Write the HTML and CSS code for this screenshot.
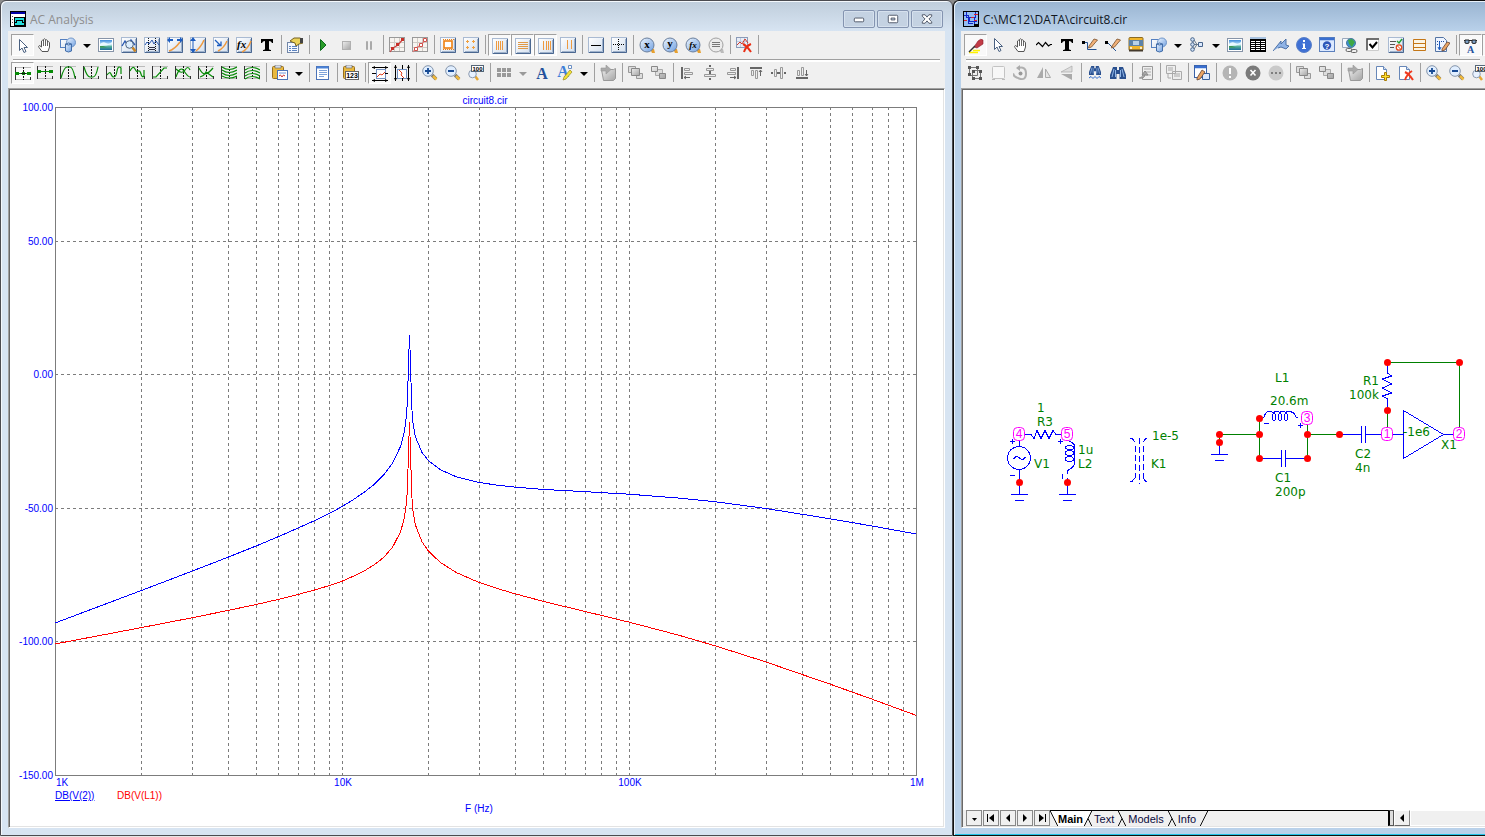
FILE: index.html
```html
<!DOCTYPE html>
<html lang="en">
<head>
<meta charset="utf-8">
<title>AC Analysis</title>
<link rel="stylesheet" href="styles.css">
</head>
<body>
<svg class="defs" aria-hidden="true">
<defs>
<linearGradient id="g-box" x1="0" y1="0" x2="1" y2="1"><stop offset="0" stop-color="#fff"/><stop offset="1" stop-color="#d3dfee"/></linearGradient>
<linearGradient id="g-gray" x1="0" y1="0" x2="1" y2="1"><stop offset="0" stop-color="#eee"/><stop offset="1" stop-color="#a4a4a4"/></linearGradient>
<linearGradient id="g-blue" x1="0" y1="0" x2="1" y2="1"><stop offset="0" stop-color="#eef6ff"/><stop offset="1" stop-color="#6f9fe0"/></linearGradient>
<linearGradient id="g-sky" x1="0" y1="0" x2="0" y2="1"><stop offset="0" stop-color="#3d8cdc"/><stop offset=".5" stop-color="#d5f0ff"/><stop offset=".6" stop-color="#5db89a"/><stop offset="1" stop-color="#1c6a9a"/></linearGradient>
<symbol id="cursor" viewBox="0 0 16 16"><path d="M4.500 1.500v11l2.500-2.500 2 4.500 2-1-2-4h3.500z" fill="#fff" stroke="#4a6080"/></symbol>
<symbol id="hand" viewBox="0 0 16 16"><path d="M5 14.500L2 10.500Q1 9 2.500 8.500L4.500 10V4Q5.500 2.500 6.500 4V2.500Q7.500 1 8.500 2.500V3.500Q9.500 2 10.500 3.500V5Q12 4 12.500 5.500V10L11 14.500z" fill="#fff" stroke="#555"/><path d="M6.500 4v5M8.500 3v6M10.500 5v4" stroke="#666" fill="none"/></symbol>
<symbol id="shapes" viewBox="0 0 16 16"><rect x=".5" y="2.500" width="9" height="8" fill="url(#g-box)" stroke="#5580c0"/><circle cx="11" cy="5.500" r="4.500" fill="url(#g-blue)" stroke="#6f95c8"/><path d="M5.500 7v7q3 2 6 0V7q-3-2-6 0z" fill="url(#g-blue)" stroke="#426da8"/><path d="M5.500 7q3 2 6 0" fill="none" stroke="#426da8"/></symbol>
<symbol id="picture" viewBox="0 0 16 16"><rect x=".5" y="1.500" width="15" height="13" fill="#fff" stroke="#8794a8"/><rect x="2" y="3" width="12" height="10" fill="url(#g-sky)"/><path d="M2 7q3-3 6-1t6-1v2q-5 2-12 2z" fill="#e9faff"/><path d="M2 9l3 0 4 1.500-7 0z" fill="#3c9a50"/></symbol>
<symbol id="box" viewBox="0 0 16 16"><rect x=".5" y=".5" width="15" height="15" fill="url(#g-box)" stroke="#a9bad2"/><path d="M15.500 1v14.500H1" fill="none" stroke="#4a6790"/><path d="M14.500 2v12.500H2" fill="none" stroke="#9fb2cc"/></symbol>
<symbol id="gzoom" viewBox="0 0 16 16"><use href="#box"/><path d="M1 9l3-5 3 5 3-6 4 5" fill="none" stroke="#2b59b0" stroke-width="1.400"/><circle cx="8.500" cy="7.500" r="3.800" fill="#dceeff" stroke="#4f6580"/><path d="M11.500 10.500l3 4" stroke="#c98422" stroke-width="2.500"/></symbol>
<symbol id="glines" viewBox="0 0 16 16"><use href="#box"/><path d="M1 8l2-3 2 2 3-4 2 4 2-3 3 4" fill="none" stroke="#2b59b0"/><path d="M4.500 1v14M11.500 1v14" stroke="#111" stroke-dasharray="1 1"/><path d="M5 10.500h6M5 12.500h6" stroke="#334"/></symbol>
<symbol id="gh" viewBox="0 0 16 16"><use href="#box"/><path d="M2 14q6-2 11-9" fill="none" stroke="#ee9a40" stroke-width="1.500"/><path d="M0 3l3-3v2h3v2H3v2zM16 3l-3-3v2h-3v2h3v2z" fill="#1d5dc0"/></symbol>
<symbol id="gv" viewBox="0 0 16 16"><use href="#box"/><path d="M6 14q5-4 8-11" fill="none" stroke="#ee9a40" stroke-width="1.500"/><path d="M3 0l3 4H3.500v8H6l-3 4-3-4h2.500V4H0z" fill="#1d5dc0"/></symbol>
<symbol id="ga" viewBox="0 0 16 16"><use href="#box"/><path d="M5 14q6-3 9-10" fill="none" stroke="#ee9a40" stroke-width="1.500"/><path d="M2 3l5 5M8 4.500V8.500H4" fill="none" stroke="#1d5dc0" stroke-width="1.300"/></symbol>
<symbol id="gfx" viewBox="0 0 16 16"><use href="#box"/><path d="M6 15q6-3 9-11" fill="none" stroke="#ee9a40" stroke-width="1.500"/><text x="1" y="11" class="ic-fx">fx</text></symbol>
<symbol id="bigt" viewBox="0 0 16 16"><path d="M2 2h12v4h-1q-.5-2-3-2v8q0 1 2 1v1H4v-1q2 0 2-1V4Q3.500 4 3 6H2z" fill="#000"/></symbol>
<symbol id="props" viewBox="0 0 16 16"><rect x=".5" y="5.500" width="11" height="10" fill="#f4f8ff" stroke="#7287a8"/><path d="M2 9.500h2M2 11.500h2M2 13.500h2M5 9.500h5M5 11.500h5M5 13.500h5" stroke="#5b82c0"/><path d="M3 4l4-3 6 0 3 2v3l-4 1-3 2-1-3-3-1z" fill="#ecd25a" stroke="#756020"/><path d="M13 1h3v5h-3z" fill="#444"/></symbol>
<symbol id="play" viewBox="0 0 16 16"><path d="M5.500 2.500v11l5.500-5.500z" fill="#2a9c2a" stroke="#0c6b1d"/></symbol>
<symbol id="stop" viewBox="0 0 16 16"><rect x="4.500" y="4.500" width="8" height="8" fill="url(#g-gray)" stroke="#b0b0b0"/></symbol>
<symbol id="pause" viewBox="0 0 16 16"><path d="M5.500 4.500h1v8h-1zM9.500 4.500h1v8h-1z" fill="#ddd" stroke="#aaa"/></symbol>
<symbol id="pts" viewBox="0 0 16 16"><rect x=".5" y=".5" width="15" height="14" fill="#f7f4f0" stroke="#999"/><path d="M5.500 1v13M10.500 1v13M1 5.500h14M1 10.500h14" stroke="#cfcbc5"/></symbol>
<symbol id="pts1" viewBox="0 0 16 16"><use href="#pts"/><path d="M1 15L4 11 9 8l5-6" fill="none" stroke="#c44" stroke-width="1.200"/><path d="M2 10h3v3H2zM7 6h3v3H7zM12 1h3v3h-3z" fill="#c83028"/></symbol>
<symbol id="pts2" viewBox="0 0 16 16"><use href="#pts"/><path d="M1 15L4 11 9 8l5-6" fill="none" stroke="#d77" stroke-width="1.200"/><path d="M2.500 10.500h3v3h-3zM7.500 6.500h3v3h-3zM11.500 1.500h3v3h-3z" fill="#fff" stroke="#d0504a"/></symbol>
<symbol id="odots" viewBox="0 0 16 16"><use href="#box"/><rect x="4" y="4" width="8" height="7" fill="#fff" stroke="#f08010" stroke-width="1.600"/><path d="M3 2.500h11M3 12.500h11" stroke="#f08010" stroke-dasharray="1 1"/></symbol>
<symbol id="oplus" viewBox="0 0 16 16"><use href="#box"/><path d="M3 4.500h3M4.500 3v3M9 4.500h3M10.500 3v3M3 10.500h3M4.500 9v3M9 10.500h3M10.500 9v3" stroke="#f0a040"/></symbol>
<symbol id="vl4" viewBox="0 0 16 16"><use href="#box"/><path d="M4.500 3v9M6.500 3v9M8.500 3v9M10.500 3v9" stroke="#ee9a40"/></symbol>
<symbol id="hl4" viewBox="0 0 16 16"><use href="#box"/><path d="M3 4.500h10M3 6.500h10M3 8.500h10M3 10.500h10" stroke="#e09a48"/></symbol>
<symbol id="vl3" viewBox="0 0 16 16"><use href="#box"/><path d="M5.500 3v9M8.500 3v9M10.500 3v9M12.500 3v9" stroke="#ee9a40"/></symbol>
<symbol id="vl2" viewBox="0 0 16 16"><use href="#box"/><path d="M7.500 3v9M11.500 3v9" stroke="#ee9a40"/></symbol>
<symbol id="hbar" viewBox="0 0 16 16"><use href="#box"/><path d="M3 8.500h10" stroke="#000"/></symbol>
<symbol id="cross" viewBox="0 0 16 16"><use href="#box"/><path d="M2 7.500h12M7.500 2v12" stroke="#000" stroke-dasharray="1 1"/></symbol>
<symbol id="ball" viewBox="0 0 16 16"><path d="M11 12h4l1 4h-3z" fill="#e6a030"/><circle cx="8" cy="8" r="7" fill="url(#g-blue)" stroke="#6b7f9c"/></symbol>
<symbol id="bx" viewBox="0 0 16 16"><use href="#ball"/><text x="8" y="11" class="ic-ball">x</text></symbol>
<symbol id="by" viewBox="0 0 16 16"><use href="#ball"/><text x="8" y="10" class="ic-ball">y</text></symbol>
<symbol id="bf" viewBox="0 0 16 16"><use href="#ball"/><text x="8" y="11" class="ic-ball ic-it">fx</text></symbol>
<symbol id="bg" viewBox="0 0 16 16"><path d="M11 12h4l1 4h-3z" fill="#bbb"/><circle cx="8" cy="8" r="7" fill="#ececec" stroke="#a0a0a0"/><path d="M4 5.500h8M4 7.500h8M4 9.500h8" stroke="#777"/></symbol>
<symbol id="gdel" viewBox="0 0 16 16"><rect x=".5" y=".5" width="11" height="10" fill="#e8edf6" stroke="#8b9bb8"/><path d="M4.500 1v9M8.500 1v9M1 4.500h10" stroke="#c3cde0"/><path d="M1 8l3-3 2 2 3-5 3 4" fill="none" stroke="#d23a28"/><path d="M7 7q4 2 8 8M15 7q-5 2-7 8" stroke="#ea2e14" stroke-width="2" fill="none"/></symbol>
<symbol id="ax" viewBox="0 0 16 16"><path d="M0 1.500h16M0 13.500h16" stroke="#bbb"/><path d="M.5 1v13M15.500 11v3" stroke="#333"/><path d="M8.500 1v13" stroke="#111" stroke-dasharray="2 1"/></symbol>
<symbol id="a1" viewBox="0 0 16 16"><use href="#ax"/><path d="M0 7.500h16" stroke="#078a07"/><path d="M0 6h4v3H0zM12 6h4v3h-4zM7 6h3v3H7z" fill="#078a07"/><path d="M6 7.500h5" stroke="#111"/></symbol>
<symbol id="a2" viewBox="0 0 16 16"><use href="#ax"/><path d="M0 6.500h16" stroke="#078a07"/><path d="M0 5h4v3H0zM12 5h4v3h-4z" fill="#078a07"/></symbol>
<symbol id="a3" viewBox="0 0 16 16"><use href="#ax"/><path class="gr" d="M1 13Q4 2 7 2h3q3 0 5 11"/></symbol>
<symbol id="a4" viewBox="0 0 16 16"><use href="#ax"/><path class="gr" d="M1 2q3 10 6 10h3q3 0 5-10"/></symbol>
<symbol id="a5" viewBox="0 0 16 16"><use href="#ax"/><path class="gr" d="M1 10q3-4 4-1t3 3q2 0 3-6t4-3v6"/></symbol>
<symbol id="a6" viewBox="0 0 16 16"><use href="#ax"/><path class="gr" d="M1 6q3-6 5-2t3 2q2-1 3 3t3 2V5"/></symbol>
<symbol id="a7" viewBox="0 0 16 16"><use href="#ax"/><path class="gr" d="M1 12h3l8-9h3"/></symbol>
<symbol id="a8" viewBox="0 0 16 16"><use href="#ax"/><path class="gr" d="M1 12q4-12 8-6t6 6M1 4q6 6 9 1t5 0"/></symbol>
<symbol id="a9" viewBox="0 0 16 16"><use href="#ax"/><path class="gr" d="M1 3q3 6 6 6t8-6M2 12q4-1 6-5l7 5"/></symbol>
<symbol id="a10" viewBox="0 0 16 16"><use href="#ax"/><path class="gr" d="M1 2q7 5 15 0M1 5q7 5 15 0M1 8q7 5 15 0M1 11q7 4 15 0"/></symbol>
<symbol id="a11" viewBox="0 0 16 16"><use href="#ax"/><path class="gr" d="M1 5q7-5 15 0M1 8q7-5 15 0M1 11q7-5 15 0M1 14q7-5 15 0"/></symbol>
<symbol id="clip" viewBox="0 0 16 16"><rect x=".5" y="1.500" width="11" height="12" rx="1" fill="#e9b93f" stroke="#9a701c"/><path d="M3 0h6v3H3z" fill="#d8dde6" stroke="#666" stroke-width=".6"/></symbol>
<symbol id="clipg" viewBox="0 0 16 16"><use href="#clip"/><rect x="5.500" y="5.500" width="10" height="9" fill="#fff" stroke="#4b73b8"/><path d="M7 8h7" stroke="#6e97d8"/><path d="M7 11l1.500-1 1.500 2 1.500-2 1.500 1" fill="none" stroke="#c33"/></symbol>
<symbol id="clipn" viewBox="0 0 16 16"><use href="#clip"/><rect x="2.500" y="6.500" width="13" height="8" fill="#fff" stroke="#666"/><text x="9" y="13" class="ic-num">123</text></symbol>
<symbol id="list" viewBox="0 0 16 16"><rect x="1.500" y="1.500" width="12" height="13" fill="#fff" stroke="#4b73b8"/><path d="M2 2.500h11" stroke="#4b83d8" stroke-width="2"/><path d="M4 5.500h8M4 7.500h8M4 9.500h8M4 11.500h5" stroke="#7ea3da"/></symbol>
<symbol id="rng" viewBox="0 0 16 16"><rect x="4.500" y="3.500" width="9" height="9" fill="#fff" stroke="#7390c0"/><path d="M5 11l3-3 2 1 3-3" fill="none" stroke="#e23b1b"/><path d="M0 1.500h16M0 14.500h16M0 7.500h4M13 7.500h3" stroke="#000"/><path d="M0 1.500l3-1.500v3zM16 1.500L13 0v3zM0 14.500l3-1.500v3zM16 14.500l-3-1.500v3z"/></symbol>
<symbol id="rngv" viewBox="0 0 16 16"><use href="#rng" transform="rotate(90 8 8)"/></symbol>
<symbol id="zin" viewBox="0 0 16 16"><path d="M10 10l4 4" stroke="#777" stroke-width="3.500"/><path d="M11 11l3.500 3.500" stroke="#efb83c" stroke-width="2.500"/><circle cx="6" cy="6" r="5.300" fill="#e0eeff" stroke="#8494aa"/><path d="M3 6h6M6 3v6" stroke="#174a94" stroke-width="1.800"/></symbol>
<symbol id="zout" viewBox="0 0 16 16"><path d="M10 10l4 4" stroke="#777" stroke-width="3.500"/><path d="M11 11l3.500 3.500" stroke="#efb83c" stroke-width="2.500"/><circle cx="6" cy="6" r="5.300" fill="#e0eeff" stroke="#8494aa"/><path d="M3 6h6" stroke="#174a94" stroke-width="1.800"/></symbol>
<symbol id="z100" viewBox="0 0 16 16"><path d="M7 11l3 4" stroke="#e6a834" stroke-width="2.500"/><circle cx="4.500" cy="9" r="3.800" fill="#e8f2ff" stroke="#8d9bb0"/><rect x="3.500" y=".5" width="12" height="6" fill="#fff" stroke="#567"/><text x="9.500" y="6" class="ic-100">100</text></symbol>
<symbol id="grid" viewBox="0 0 16 16"><path d="M1 3h4v4H1zM6 3h4v4H6zM11 3h4v4h-4zM1 8h4v4H1zM6 8h4v4H6zM11 8h4v4h-4z" fill="#999"/></symbol>
<symbol id="fonta" viewBox="0 0 16 16"><text x="8" y="14" class="ic-a">A</text></symbol>
<symbol id="fontp" viewBox="0 0 16 16"><text x="6" y="12" class="ic-a ic-lt">A</text><path d="M11.500 .5h3v3h-3z" fill="#fff" stroke="#6a8fc4"/><path d="M13 5l2 2-6 7-3 1 1-3z" fill="#f2e236" stroke="#988a20" stroke-width=".7"/></symbol>
<symbol id="fold" viewBox="0 0 16 16"><path d="M1.500 4.500h12l2-1v10l-2 2h-10z" fill="url(#g-gray)" stroke="#999"/><path d="M1 3h5V0l5 4.500L6 9V6H1z" fill="#aaa" stroke="#999" stroke-width=".6"/></symbol>
<symbol id="front" viewBox="0 0 16 16"><path d="M.5 1.500h7v6h-7zM8.500 8.500h6v5h-6z" fill="#ddd" stroke="#999"/><path d="M3.500 3.500h8v7h-8z" fill="url(#g-gray)" stroke="#888"/></symbol>
<symbol id="back" viewBox="0 0 16 16"><path d="M4.500 4.500h7v6h-7z" fill="#ddd" stroke="#aaa"/><path d="M.5 1.500h6v5h-6zM8.500 8.500h6v5h-6z" fill="url(#g-gray)" stroke="#888"/></symbol>
<symbol id="al" viewBox="0 0 16 16"><path d="M3 2v12" stroke="#666" stroke-width="2"/><path d="M5.500 3.500h5v2h-5zM5.500 7.500h8v2h-8z" fill="#eee" stroke="#999"/><path d="M5 12.500h6M7 11l-2 1.500 2 1.500" fill="none" stroke="#666"/></symbol>
<symbol id="ac" viewBox="0 0 16 16"><path d="M8 0v2M8 6v3M8 13v2" stroke="#666" stroke-width="2"/><path d="M4.500 3.500h7v2h-7zM2.500 9.500h11v2h-11z" fill="#eee" stroke="#999"/></symbol>
<symbol id="ar" viewBox="0 0 16 16"><use href="#al" transform="translate(16 0) scale(-1 1)"/></symbol>
<symbol id="at" viewBox="0 0 16 16"><use href="#al" transform="matrix(0 1 1 0 0 0)"/></symbol>
<symbol id="am" viewBox="0 0 16 16"><use href="#ac" transform="matrix(0 1 1 0 0 0)"/></symbol>
<symbol id="ab" viewBox="0 0 16 16"><use href="#al" transform="matrix(0 -1 1 0 0 16)"/></symbol>
<symbol id="brush" viewBox="0 0 16 16"><path d="M1 14.500h9M5 12.500h7" stroke="#fff200" stroke-width="1.500"/><path d="M6 9l4-6q3-3 5-1v4l-6 4z" fill="#c23c46" stroke="#8c1c28" stroke-width=".6"/><path d="M1 14l6-6" stroke="#333" stroke-width="1.500"/></symbol>
<symbol id="wave" viewBox="0 0 16 16"><path d="M0 8l2.500-2.500 4 4 3-4 3 3.500 2-1.500h1.500" fill="none" stroke="#000" stroke-width="1.200"/></symbol>
<symbol id="pencil" viewBox="0 0 16 16"><path d="M7 9l5-7 3.500 1-6 7-3 1z" fill="#f0b078" stroke="#7a4f2a" stroke-width=".8"/></symbol>
<symbol id="wire" viewBox="0 0 16 16"><path d="M1 5.500h4.500v7h9" fill="none" stroke="#225090"/><path d="M0 4h3v3H0z"/><use href="#pencil"/></symbol>
<symbol id="diag" viewBox="0 0 16 16"><path d="M2 5l9 9" stroke="#225090"/><path d="M0 4h3v3H0z"/><use href="#pencil"/></symbol>
<symbol id="bus" viewBox="0 0 16 16"><rect x="1" y=".5" width="14" height="13" rx="1" fill="#f0b52a" stroke="#8a6a24"/><path d="M1 3h14v6H1z" fill="#5d83a8"/><path d="M5 4h6v4H5z" fill="#b8d2e8"/><path d="M1 12.500h14v2H1z" fill="#443a2c"/><path d="M2 11h2M12 11h2" stroke="#fff" stroke-width="1.500"/></symbol>
<symbol id="tree" viewBox="0 0 16 16"><path d="M4 4v8M5 7.500h5M5 3l3 4.500-3 4.500" fill="none" stroke="#678"/><circle cx="3.500" cy="2.500" r="1.800" fill="#cfe0f4" stroke="#47648c"/><circle cx="3.500" cy="7.500" r="1.800" fill="#cfe0f4" stroke="#47648c"/><circle cx="3.500" cy="12.500" r="1.800" fill="#cfe0f4" stroke="#47648c"/><path d="M9.500 5.500h4v4h-4z" fill="#dceaff" stroke="#47648c"/></symbol>
<symbol id="table" viewBox="0 0 16 16"><path d="M0 0h16v2H0z" fill="#a9c3e0"/><path d="M0 2h16v13H0z"/><path d="M1 4.500h4M6 4.500h4M11 4.500h4M1 6.500h4M6 6.500h4M11 6.500h4M1 8.500h4M6 8.500h4M11 8.500h4M1 10.500h4M6 10.500h4M11 10.500h4M1 12.500h4M6 12.500h4M11 12.500h4" stroke="#fff"/></symbol>
<symbol id="flag" viewBox="0 0 16 16"><path d="M0 14L8 4l0 3 5-5 0 6 3 1-3 3-5-2-3 1" fill="#8fb3e6" stroke="#41689f" stroke-width=".9"/></symbol>
<symbol id="info" viewBox="0 0 16 16"><circle cx="8" cy="8" r="7.500" fill="#3f70d4" stroke="#5a80c8"/><path d="M7 3h2v2H7zM6.500 6.500H9V11h1v1H6v-1h1V7.500h-.5z" fill="#fff"/></symbol>
<symbol id="help" viewBox="0 0 16 16"><rect x=".5" y=".5" width="15" height="14" fill="#dce9ff" stroke="#5c80bc"/><path d="M1 2h14" stroke="#3a6fd0" stroke-width="2.500"/><circle cx="8" cy="8.500" r="4.200" fill="#2d55b8"/><text x="8" y="11.500" class="ic-q">?</text></symbol>
<symbol id="web" viewBox="0 0 16 16"><path d="M.5 1.500h7v9h-7z" fill="#f4f8ff" stroke="#9aa8bc"/><circle cx="9" cy="6" r="4.500" fill="#3b8fd0" stroke="#4a7a9c"/><path d="M6 3l4-1 3 3-3 5-3-3z" fill="#3fa844"/><rect x="4" y="11.500" width="6" height="3" rx="1.500" fill="none" stroke="#666"/><rect x="9" y="12.500" width="6" height="3" rx="1.500" fill="none" stroke="#666"/></symbol>
<symbol id="check" viewBox="0 0 16 16"><path d="M2.500 2.500h11v11h-11z" fill="#fff"/><path d="M2 13.500V2h12" fill="none" stroke="#444" stroke-width="1.500"/><path d="M13.500 3v10.500H3" fill="none" stroke="#ccc"/><path d="M4.500 7l3 3.500L12 5" fill="none" stroke="#000" stroke-width="2"/></symbol>
<symbol id="enab" viewBox="0 0 16 16"><use href="#box"/><path d="M2 4.500h6M2 7.500h5M2 10.500h4" stroke="#555"/><path d="M9 4l2 2 3-4" fill="none" stroke="#20a030" stroke-width="1.300"/><circle cx="11" cy="10.500" r="2.700" fill="#fff" stroke="#e04a20" stroke-width="1.300"/><path d="M9 8.500l4 4" stroke="#e04a20"/></symbol>
<symbol id="rows" viewBox="0 0 16 16"><path d="M2.500 2.500h12v11h-12zM2 6.500h12M2 10.500h12" fill="#fbf5e6" stroke="#c47718"/></symbol>
<symbol id="sheet" viewBox="0 0 16 16"><path d="M1.500 .5h8l3 3v11h-11z" fill="#eef4ff" stroke="#5474a4"/><path d="M3 4.500h7M3 7.500h4" stroke="#1d4da0" stroke-dasharray="1 1"/><path d="M5.500 5v7M4 10l1.500 3L7 10" fill="none" stroke="#1d5dc0"/><path d="M8 12l5-7 3 1-5 7-3 1z" fill="#eaa565" stroke="#643" stroke-width=".8"/></symbol>
<symbol id="glassa" viewBox="0 0 16 16"><path d="M1 2.500h13" stroke="#222"/><path d="M2 2h4v3q-2 1-4 0zM9 2h4v3q-2 1-4 0z" fill="#7fa5cc" stroke="#222"/><text x="7.500" y="15" class="ic-sa">A</text></symbol>
<symbol id="sel" viewBox="0 0 16 16"><path d="M2.500 2.500h8v8h-8zM5.500 5.500h8v8h-8z" fill="none" stroke="#777"/><path d="M1 1h3v3H1zM9 1h3v3H9zM1 8h3v3H1zM5 5h3v3H5zM12 5h3v3h-3zM5 12h3v3H5zM12 12h3v3h-3z" fill="#555"/></symbol>
<symbol id="frm" viewBox="0 0 16 16"><rect x="2.500" y="1.500" width="12" height="12" rx="1" fill="#f7f7f7" stroke="#c3c3c3"/><path d="M2 14.500h3M12 14.500h3" stroke="#bbb"/></symbol>
<symbol id="rot" viewBox="0 0 16 16"><path d="M5 3q8-2 8 5.500t-7 5-5-5" fill="none" stroke="#b0b0b0" stroke-width="2"/><circle cx="7.500" cy="8.500" r="2" fill="#999"/><path d="M7 0v6L3 3z" fill="#aaa"/></symbol>
<symbol id="flh" viewBox="0 0 16 16"><path d="M1 13L7 2v11z" fill="#aaa"/><path d="M9.500 4v8.500h5z" fill="#e4e4e4" stroke="#aaa"/></symbol>
<symbol id="flv" viewBox="0 0 16 16"><path d="M13 1L2 7h11z" fill="#ddd" stroke="#aaa" stroke-width=".7"/><path d="M13 15L2 9h11z" fill="#aaa"/></symbol>
<symbol id="bino" viewBox="0 0 16 16"><path d="M3 2h4v3h2V2h4l3 8v4H9.500V9h-3v5H0v-4z" fill="#294f8e"/><path d="M4 4L2 12M12 4l2 8M5.500 5v7M10.500 5v7" stroke="#91b7e8"/></symbol>
<symbol id="binow" viewBox="0 0 16 16"><use href="#bino" x="2" y="-1" width="12" height="13"/><path d="M2 13l2-1.500 2 2 2-2 2 2 2-2 2 1.500" fill="none" stroke="#2a66c8"/></symbol>
<symbol id="rep" viewBox="0 0 16 16"><path d="M4.500 1.500h10v13h-10z" fill="#eee" stroke="#999"/><path d="M6 4h7M8 7h5M8 10h5" stroke="#aaa"/><path d="M1 13q6 1 6-4M4 10l3-4 3 4z" fill="#aaa" stroke="#888"/></symbol>
<symbol id="pages" viewBox="0 0 16 16"><path d="M.5.500h9v8h-9zM6.500 6.500h9v8h-9z" fill="#eee" stroke="#aaa"/><path d="M2 3h5M2 5h5M8 9h6M8 11h6M2 9v4h3" fill="none" stroke="#aaa"/></symbol>
<symbol id="wedit" viewBox="0 0 16 16"><rect x=".5" y=".5" width="12" height="12" fill="#fff" stroke="#3a62a8"/><path d="M1 2h11" stroke="#3a6fd0" stroke-width="2.500"/><path d="M8.500 8.500h7v6h-7z" fill="#dbe9ff" stroke="#37619c"/><path d="M3 13l5-8 3 2-5 7-3 1z" fill="#eaa565" stroke="#643" stroke-width=".8"/></symbol>
<symbol id="sexc" viewBox="0 0 16 16"><circle cx="8" cy="8" r="7.500" fill="#b5b5b5"/><path d="M8 3v6M8 11v2" stroke="#fff" stroke-width="2"/></symbol>
<symbol id="sx" viewBox="0 0 16 16"><circle cx="8" cy="8" r="7.500" fill="#7b7b7b"/><path d="M5.500 5l5 5.500M10.500 5l-5 5.500" stroke="#fff" stroke-width="1.600"/></symbol>
<symbol id="sdot" viewBox="0 0 16 16"><circle cx="8" cy="8" r="7.500" fill="#cacaca"/><path d="M3 8h2M7 8h2M11 8h2" stroke="#666" stroke-width="1.600"/></symbol>
<symbol id="page" viewBox="0 0 16 16"><path d="M1.500 1.500h7l3 3v10h-10z" fill="#fff" stroke="#6787b8"/><path d="M8.500 1.500v3h3" fill="#d5e3f8" stroke="#6787b8"/></symbol>
<symbol id="padd" viewBox="0 0 16 16"><use href="#page"/><path d="M9.500 7.500h2v3h3v2h-3v3h-2v-3h-3v-2h3z" fill="#ffe02c" stroke="#a87c08"/></symbol>
<symbol id="pdel" viewBox="0 0 16 16"><use href="#page"/><path d="M7 7q4 2 8 8M14 6q-5 3-7 9" stroke="#f03a1e" stroke-width="2" fill="none"/></symbol>
</defs>
</svg>

<main class="desktop">
<section class="win win-idle">
  <header class="title">
    <svg class="title-icon" viewBox="0 0 16 16" shape-rendering="crispEdges"><path d="M0 0h16v16H0z"/><path d="M1 3h14v12H1z" fill="#fff"/><path d="M1 1h14v2H1z" fill="#0000a8"/><path d="M4 6h11v9H4z"/><path d="M5 7h9v7H5z" fill="#22dede"/><path d="M5 12q2 0 2-3h5q0 3 2 3" fill="none" stroke="#000"/><path d="M2 5h1M2 8h1M2 11h1" stroke="#555"/></svg>
    <h1>AC Analysis</h1>
    <div class="caps">
      <button aria-label="Minimize"><svg viewBox="0 0 31 17"><rect x="10.500" y="7.500" width="10" height="4" rx="1" fill="#fff" stroke="#4d5566"/></svg></button>
      <button aria-label="Restore"><svg viewBox="0 0 31 17"><rect x="10.500" y="4.500" width="10" height="8" rx="1" fill="#fff" stroke="#4d5566"/><path d="M13.500 7.500h4v2h-4z" fill="#ccd8e8" stroke="#4d5566"/></svg></button>
      <button aria-label="Close"><svg viewBox="0 0 31 17"><path d="M10.500 4h3l2 2.500 2-2.500h3v1.500L17.500 8.500l3 3V13h-3l-2-2.500-2 2.500h-3v-1.500l3-3-3-3z" fill="#fff" stroke="#4d5566"/></svg></button>
    </div>
  </header>
  <div class="bars">
    <div class="bar" role="toolbar" aria-label="Main">
      <button class="on" aria-label="Select"><svg><use href="#cursor"/></svg></button><button aria-label="Pan"><svg><use href="#hand"/></svg></button><button aria-label="Graphics"><svg><use href="#shapes"/></svg></button><button class="dd" aria-label="Graphics menu"></button><button aria-label="Picture"><svg><use href="#picture"/></svg></button><button aria-label="Scale"><svg><use href="#gzoom"/></svg></button><button aria-label="Cursor mode"><svg><use href="#glines"/></svg></button><button aria-label="Horizontal tag"><svg><use href="#gh"/></svg></button><button aria-label="Vertical tag"><svg><use href="#gv"/></svg></button><button aria-label="Point tag"><svg><use href="#ga"/></svg></button><button aria-label="Performance tag"><svg><use href="#gfx"/></svg></button><button aria-label="Text"><svg><use href="#bigt"/></svg></button>
      <i></i><button aria-label="Properties"><svg><use href="#props"/></svg></button>
      <i></i><button aria-label="Run"><svg><use href="#play"/></svg></button><button aria-label="Stop"><svg><use href="#stop"/></svg></button><button aria-label="Pause"><svg><use href="#pause"/></svg></button>
      <i></i><button aria-label="Data points"><svg><use href="#pts1"/></svg></button><button aria-label="Tokens"><svg><use href="#pts2"/></svg></button>
      <i></i><button aria-label="Ruler"><svg><use href="#odots"/></svg></button><button aria-label="Plus marks"><svg><use href="#oplus"/></svg></button>
      <i></i><button class="on" aria-label="Vertical grid"><svg><use href="#vl4"/></svg></button><button class="on" aria-label="Horizontal grid"><svg><use href="#hl4"/></svg></button><button class="on" aria-label="Minor log grid"><svg><use href="#vl3"/></svg></button><button aria-label="Minor grid"><svg><use href="#vl2"/></svg></button>
      <i></i><button aria-label="Baseline"><svg><use href="#hbar"/></svg></button><button aria-label="Crosshair"><svg><use href="#cross"/></svg></button>
      <i></i><button aria-label="Go to X"><svg><use href="#bx"/></svg></button><button aria-label="Go to Y"><svg><use href="#by"/></svg></button><button aria-label="Go to performance"><svg><use href="#bf"/></svg></button><button aria-label="Go to branch"><svg><use href="#bg"/></svg></button>
      <i></i><button aria-label="Delete plot"><svg><use href="#gdel"/></svg></button><i></i>
    </div>
    <div class="bar" role="toolbar" aria-label="Cursor">
      <button class="on" aria-label="Next point"><svg><use href="#a1"/></svg></button><button aria-label="Next"><svg><use href="#a2"/></svg></button><button aria-label="Peak"><svg><use href="#a3"/></svg></button><button aria-label="Valley"><svg><use href="#a4"/></svg></button><button aria-label="High"><svg><use href="#a5"/></svg></button><button aria-label="Low"><svg><use href="#a6"/></svg></button><button aria-label="Inflection"><svg><use href="#a7"/></svg></button><button aria-label="Global high"><svg><use href="#a8"/></svg></button><button aria-label="Global low"><svg><use href="#a9"/></svg></button><button aria-label="Bottom"><svg><use href="#a10"/></svg></button><button aria-label="Top"><svg><use href="#a11"/></svg></button>
      <i></i><button aria-label="Copy plot"><svg><use href="#clipg"/></svg></button><button class="dd" aria-label="Copy menu"></button>
      <i></i><button aria-label="List"><svg><use href="#list"/></svg></button>
      <i></i><button aria-label="Copy numbers"><svg><use href="#clipn"/></svg></button>
      <i></i><button class="on" aria-label="X range"><svg><use href="#rng"/></svg></button><button aria-label="Y range"><svg><use href="#rngv"/></svg></button>
      <i></i><button aria-label="Zoom in"><svg><use href="#zin"/></svg></button><button aria-label="Zoom out"><svg><use href="#zout"/></svg></button><button aria-label="Zoom 100"><svg><use href="#z100"/></svg></button>
      <i></i><button aria-label="Colors"><svg><use href="#grid"/></svg></button><button class="dd dim" aria-label="Colors menu"></button><button aria-label="Font"><svg><use href="#fonta"/></svg></button><button aria-label="Text style"><svg><use href="#fontp"/></svg></button><button class="dd" aria-label="Text style menu"></button>
      <i></i><button aria-label="Go up"><svg><use href="#fold"/></svg></button>
      <i></i><button aria-label="To front"><svg><use href="#front"/></svg></button><button aria-label="To back"><svg><use href="#back"/></svg></button>
      <i></i><button aria-label="Align left"><svg><use href="#al"/></svg></button><button aria-label="Align center"><svg><use href="#ac"/></svg></button><button aria-label="Align right"><svg><use href="#ar"/></svg></button><button aria-label="Align top"><svg><use href="#at"/></svg></button><button aria-label="Align middle"><svg><use href="#am"/></svg></button><button aria-label="Align bottom"><svg><use href="#ab"/></svg></button>
    </div>
  </div>
  <div class="panel">
    <svg class="canvas plot" viewBox="10 90 933 736">
      <g class="grid" shape-rendering="crispEdges">
        <path class="dash" d="M141.500 107v668M192.500 107v668M228.500 107v668M256.500 107v668M278.500 107v668M298.500 107v668M314.500 107v668M329.500 107v668M342.500 107v668M428.500 107v668M479.500 107v668M515.500 107v668M543.500 107v668M565.500 107v668M585.500 107v668M601.500 107v668M616.500 107v668M629.500 107v668M715.500 107v668M766.500 107v668M802.500 107v668M830.500 107v668M852.500 107v668M872.500 107v668M888.500 107v668M903.500 107v668"/>
        <path class="dash" d="M55 241.500h861M55 374.500h861M55 508.500h861M55 641.500h861"/>
        <path d="M55.500 107.500h861v668h-861z"/>
      </g>
      <polyline class="trace blue" points="55,623 141.400,590.500 191.900,571.200 227.800,557.300 255.600,546.200 278.300,536.700 297.500,528.300 314.200,520.800 328.900,513.600 342,506.600 353.900,499.300 364.700,491.800 374.700,484 383.900,474.700 392.500,463.300 400.600,446.200 404.400,431.400 406.500,415 407.500,400 408.500,363 409.500,335 410.500,363 411.500,400 412.500,420 415.300,436.600 422,452.400 428.400,460.700 440.300,469.600 456.200,476.800 478.900,482.400 498.100,485.300 514.800,487.100 542.600,489.400 565.300,490.600 601.200,492.600 629,494.200 679.500,498.100 715.400,501.800 766,508.500 829.600,518.700 871.600,525.900 916,533.900"/>
      <polyline class="trace red" points="55,644 141.400,627.600 191.900,617.800 227.800,610.500 255.600,604.600 278.300,599.400 297.500,594.600 314.200,590.100 328.900,585.700 342,581.200 353.900,575.900 364.700,570.600 374.700,564.500 383.900,557.200 392.500,547.300 400.600,531.700 404.400,517.700 406.500,502 407.500,488 408.500,450 409.500,422 410.500,450 411.500,488 412.500,508 415.300,524.700 422,541.800 428.400,551.100 440.300,562.400 456.200,572.500 478.900,582.400 498.100,588.800 514.800,593.700 542.600,601.200 565.300,606.700 601.200,615.400 629,622.100 679.500,635.400 715.400,645.900 766,662 829.600,684 871.600,699 916,715.300"/>
      <g class="axis">
        <text class="mid" x="485" y="104">circuit8.cir</text>
        <g class="end"><text x="53" y="111">100.00</text><text x="53" y="245">50.00</text><text x="53" y="378">0.00</text><text x="53" y="512">-50.00</text><text x="53" y="645">-100.00</text><text x="53" y="779">-150.00</text></g>
        <text x="56" y="786">1K</text>
        <g class="mid"><text x="343" y="786">10K</text><text x="630" y="786">100K</text><text x="917" y="786">1M</text><text x="479" y="812">F (Hz)</text></g>
        <text class="ul" x="55" y="799">DB(V(2))</text><text class="rd" x="117" y="799">DB(V(L1))</text>
      </g>
    </svg>
  </div>
</section>

<section class="win win-active">
  <header class="title">
    <svg class="title-icon" viewBox="0 0 16 16" shape-rendering="crispEdges"><path d="M0 0h16v16H0z"/><path d="M1 1h14v14H1z" fill="#94bdf2"/><path d="M1 4h4v8h5M3 1v5h8v8M6 6v4h8M12 1v6" fill="none" stroke="#1226c8"/><path d="M11 3h4M8 6h3M11 9h3M1 9h3" stroke="#d8202c"/><path d="M11 13h4v2h-4z"/></svg>
    <h1>C:\MC12\DATA\circuit8.cir</h1>
  </header>
  <div class="bars">
    <div class="bar" role="toolbar" aria-label="Editor">
      <button class="on" aria-label="Highlight"><svg><use href="#brush"/></svg></button><button aria-label="Select"><svg><use href="#cursor"/></svg></button><button aria-label="Pan"><svg><use href="#hand"/></svg></button><button aria-label="Component"><svg><use href="#wave"/></svg></button><button aria-label="Text"><svg><use href="#bigt"/></svg></button><button aria-label="Wire"><svg><use href="#wire"/></svg></button><button aria-label="Diagonal wire"><svg><use href="#diag"/></svg></button><button aria-label="Bus"><svg><use href="#bus"/></svg></button><button aria-label="Graphics"><svg><use href="#shapes"/></svg></button><button class="dd" aria-label="Graphics menu"></button><button aria-label="Flowchart"><svg><use href="#tree"/></svg></button><button class="dd" aria-label="Flowchart menu"></button><button aria-label="Picture"><svg><use href="#picture"/></svg></button><button aria-label="Table"><svg><use href="#table"/></svg></button><button aria-label="Flag"><svg><use href="#flag"/></svg></button><button aria-label="Info"><svg><use href="#info"/></svg></button><button aria-label="Help"><svg><use href="#help"/></svg></button><button aria-label="Link"><svg><use href="#web"/></svg></button><button aria-label="Enable"><svg><use href="#check"/></svg></button><button aria-label="Region enable"><svg><use href="#enab"/></svg></button><button aria-label="Rows"><svg><use href="#rows"/></svg></button><button aria-label="Edit sheet"><svg><use href="#sheet"/></svg></button>
      <i></i><button class="on" aria-label="Attribute text"><svg><use href="#glassa"/></svg></button><button class="on" aria-label="Grid text"><svg><use href="#glassa"/></svg></button>
    </div>
    <div class="bar" role="toolbar" aria-label="Edit">
      <button aria-label="Select box"><svg><use href="#sel"/></svg></button><button aria-label="Frame"><svg><use href="#frm"/></svg></button><button aria-label="Rotate"><svg><use href="#rot"/></svg></button><button aria-label="Flip horizontal"><svg><use href="#flh"/></svg></button><button aria-label="Flip vertical"><svg><use href="#flv"/></svg></button>
      <i></i><button aria-label="Find component"><svg><use href="#binow"/></svg></button><button aria-label="Find"><svg><use href="#bino"/></svg></button>
      <i></i><button aria-label="Replace"><svg><use href="#rep"/></svg></button>
      <i></i><button aria-label="Copy pages"><svg><use href="#pages"/></svg></button>
      <i></i><button aria-label="Edit window"><svg><use href="#wedit"/></svg></button>
      <i></i><button aria-label="Errors"><svg><use href="#sexc"/></svg></button><button aria-label="Clear"><svg><use href="#sx"/></svg></button><button aria-label="More"><svg><use href="#sdot"/></svg></button>
      <i></i><button aria-label="To front"><svg><use href="#front"/></svg></button><button aria-label="To back"><svg><use href="#back"/></svg></button>
      <i></i><button aria-label="Go up"><svg><use href="#fold"/></svg></button>
      <i></i><button aria-label="Add page"><svg><use href="#padd"/></svg></button><button aria-label="Delete page"><svg><use href="#pdel"/></svg></button>
      <i></i><button aria-label="Zoom in"><svg><use href="#zin"/></svg></button><button aria-label="Zoom out"><svg><use href="#zout"/></svg></button><button aria-label="Zoom 100"><svg><use href="#z100"/></svg></button>
    </div>
  </div>
  <div class="panel">
    <svg class="canvas" viewBox="963 90 522 720" preserveAspectRatio="xMinYMin meet">
      <g class="wire" shape-rendering="crispEdges">
        <path d="M1219 434.500h40M1219.500 434v8M1259.500 418v40M1307.500 424v34M1307 434.500h32M1387 362.500h72.500v66M1387.500 410v18"/>
      </g>
      <g class="part" shape-rendering="crispEdges">
        <path d="M1219.500 442v12M1211 454.500h17M1215 460.500h9"/>
        <path d="M1259 458.500h22M1281.500 450v17M1285.500 450v17M1286 458.500h21"/>
        <path d="M1339 434.500h22M1361.500 426v17M1365.500 426v17M1366 434.500h15M1393 434.500h10M1403.500 410.500v48l40-24zM1444 434.500h9"/>
        <path d="M1387.500 362v11l4 3-9 3 9 5-9 4 9 5-9 3 5 3v11"/>
        <path d="M1019.500 440v6M1019.500 470v24M1011 494.500h17M1015 500.500h9M1025 434.500h6l3 4 3-8 4 8 4-8 4 8 4-8 3 4h6"/>
        <path d="M1067.500 482v12M1059 494.500h17M1063 500.500h9M1067.500 482v-4M1062.500 474v5"/>
        <path d="M1010 441.500h5M1012.500 439v5M1010 475.500h5M1058 441.500h5M1060.500 439v5M1298 425.500h5M1300.500 423v5M1264 423.500h5"/>
        <path d="M1130 438.500h2l3 3.500M1147 438.500h-1l-3 3.500M1130 481.500h2l3-3.500M1147 481.500h-1l-3-3.500"/>
        <path stroke-dasharray="6 3" d="M1135.500 446v32M1143.500 446v32M1139.500 438v46"/>
        <path d="M1263.500 418.500q2-7 5-7 7 0 7 5 0 4-1.500 4t-1.500-4q0-5 4-5 5 0 5 5 0 4-1.500 4t-1.500-4q0-5 4-5 5 0 5 5 0 4-1.500 4t-1.500-4q0-5 4-5 6 0 7 5l3 2"/>
        <path d="M1067.500 440.500q7 2 7 6 0 3-5 3-4 0-4-2t4-2q5 0 5 5t-5 5q-4 0-4-2.500t4-2.500q5 0 5 5.500t-5 5.500q-4 0-4-2.500t4-2.500q5 0 5 6 0 5-7 8v3"/>
        <path d="M1013.500 459l2-2q2-1 4 1t4 1l2-2" />
        <circle cx="1019" cy="458" r="11.500"/>
      </g>
      <g fill="#f00"><circle cx="1219.500" cy="434.500" r="3.500"/><circle cx="1219.500" cy="442.500" r="3.500"/><circle cx="1259.500" cy="418.500" r="3.500"/><circle cx="1259.500" cy="434.500" r="3.500"/><circle cx="1259.500" cy="458.500" r="3.500"/><circle cx="1307.500" cy="434.500" r="3.500"/><circle cx="1307.500" cy="458.500" r="3.500"/><circle cx="1339.500" cy="434.500" r="3.500"/><circle cx="1387.500" cy="362.500" r="3.500"/><circle cx="1459.500" cy="362.500" r="3.500"/><circle cx="1387.500" cy="410.500" r="3.500"/><circle cx="1019.500" cy="482.500" r="3.500"/><circle cx="1067.500" cy="482.500" r="3.500"/></g>
      <g class="node"><rect x="1013.500" y="427.500" width="11" height="13" rx="4"/><rect x="1061.500" y="427.500" width="11" height="13" rx="4"/><rect x="1301.500" y="411.500" width="11" height="13" rx="4"/><rect x="1381.500" y="427.500" width="11" height="13" rx="4"/><rect x="1453.500" y="427.500" width="11" height="13" rx="4"/>
        <text x="1019" y="438">4</text><text x="1067" y="438">5</text><text x="1307" y="422">3</text><text x="1387" y="438">1</text><text x="1459" y="438">2</text></g>
      <g class="label"><text x="1037" y="412">1</text><text x="1037" y="426">R3</text><text x="1034" y="468">V1</text><text x="1078" y="454">1u</text><text x="1078" y="468">L2</text><text x="1152" y="440">1e-5</text><text x="1151" y="468">K1</text><text x="1275" y="382">L1</text><text x="1270" y="405">20.6m</text><text x="1275" y="482">C1</text><text x="1275" y="496">200p</text><text x="1363" y="385">R1</text><text x="1349" y="399">100k</text><text x="1355" y="458">C2</text><text x="1355" y="472">4n</text><text x="1403" y="436">-1e6</text><text x="1441" y="449">X1</text></g>
    </svg>
    <div class="foot">
      <div class="nav">
        <button aria-label="Page menu"><svg viewBox="0 0 14 14"><path d="M5 7h5l-2.500 3z"/></svg></button>
        <button aria-label="First page"><svg viewBox="0 0 14 14"><path d="M3 3h1v8H3zM10 3v8L5 7z"/></svg></button>
        <button aria-label="Previous page"><svg viewBox="0 0 14 14"><path d="M9 3v8L5 7z"/></svg></button>
        <button aria-label="Next page"><svg viewBox="0 0 14 14"><path d="M5 3v8l4-4z"/></svg></button>
        <button aria-label="Last page"><svg viewBox="0 0 14 14"><path d="M4 3v8l5-4zM10 3h1v8h-1z"/></svg></button>
      </div>
      <div class="tabs">
        <svg class="edge" viewBox="0 0 8 16"><path class="fill" d="M0 0h8v16z"/><path d="M0 0l8 16"/></svg>
        <button class="cur">Main</button>
        <svg class="edge" viewBox="0 0 8 16"><path class="fill" d="M0 0h8L0 16z"/><path d="M8 0L0 16M4 8l4 8"/></svg>
        <button>Text</button>
        <svg class="edge" viewBox="0 0 8 16"><path d="M4 8L0 16M0 0l8 16"/></svg>
        <button>Models</button>
        <svg class="edge" viewBox="0 0 8 16"><path d="M4 8L0 16M0 0l8 16"/></svg>
        <button>Info</button>
        <svg class="edge" viewBox="0 0 8 16"><path d="M8 0L0 16"/></svg>
      </div>
      <div class="scroll"><span class="grip"></span><button aria-label="Scroll left"><svg viewBox="0 0 14 14"><path d="M9 3v8L5 7z"/></svg></button><span class="thumb"></span></div>
    </div>
  </div>
</section>
</main>
</body>
</html>
```

FILE: styles.css
```css
* { box-sizing: border-box; }

body {
  margin: 0;
  background: #e6e6e6;
  font-family: "Open Sans", "Noto Sans", sans-serif;
  font-size: 12px;
}

button {
  margin: 0;
  padding: 0;
  border: 0;
  background: none;
  font: inherit;
  color: inherit;
}

.defs { position: absolute; width: 0; height: 0; }

.desktop {
  display: grid;
  grid-template-columns: minmax(0, 953fr) minmax(0, 532fr);
  height: 100vh;
  padding-bottom: 1px;
  background: linear-gradient(#8c8c8c 50%, #e6e6e6 50%);
}

/* window frames */
.win {
  display: flex;
  flex-direction: column;
  min-width: 0;
  min-height: 0;
  padding: 0 7px 7px;
  border: 1px solid #4b4b50;
  border-radius: 6px 6px 0 0;
  overflow: hidden;
}

.win-idle {
  background: linear-gradient(#bfcddb, #d7e4f2 30px);
  box-shadow: inset 1px 1px #f4f8fc;
}

.win-active {
  padding-right: 0;
  border-color: #111;
  border-right: 0;
  border-radius: 6px 0 0 0;
  background: linear-gradient(#99b4d1, #b9d1ea 30px);
  box-shadow: inset 1px 1px #e8f1fa, inset 0 -1px #22c3e6;
}

.title {
  display: flex;
  flex: none;
  align-items: center;
  height: 30px;
  padding: 6px 2px 0;
}

.title-icon { width: 16px; height: 16px; margin-right: 4px; flex: none; }

.title h1 {
  flex: 1;
  margin: 0;
  padding-top: 2px;
  font-size: 12px;
  font-weight: 400;
  line-height: 16px;
  white-space: nowrap;
}

.win-idle h1 { color: #8e8e8e; }
.win-active h1 { color: #10161e; }

.caps { display: flex; gap: 2px; }

.caps button {
  width: 32px;
  height: 18px;
  border: 1px solid #8494b0;
  border-radius: 2px;
  background: #c4d2e2;
  box-shadow: inset 0 0 0 1px #d6e1ee;
}

.caps svg { display: block; width: 100%; height: 100%; }

/* toolbars */
.bars { flex: none; background: #f0f0f0; }

.bar {
  display: flex;
  height: 28px;
  padding: 3px 3px 0;
  overflow: hidden;
}

.bar + .bar {
  height: 29px;
  position: relative;
}

.bar + .bar::before {
  content: "";
  position: absolute;
  top: 0;
  left: 5px;
  right: 5px;
  height: 2px;
  border-top: 1px solid #a0a0a0;
  background: #fff;
}

.bar button {
  flex: none;
  width: 23px;
  height: 22px;
  padding: 3px;
}

.bar button svg { display: block; width: 16px; height: 16px; }

.bar .on {
  padding: 3px 2px 2px 3px;
  border: 1px solid;
  border-color: #a0a0a0 #fff #fff #a0a0a0;
  background: #f9f9f9;
}

.bar .dd { width: 15px; padding: 1px 0 0 3px; }

.bar .dd::before {
  content: "";
  display: block;
  border: 4px solid transparent;
  border-top-color: #000;
  border-bottom: 0;
  width: 0;
}

.bar .dim::before { border-top-color: #999; }

.bar i {
  flex: none;
  width: 1px;
  height: 19px;
  margin: 1px 2px;
  background: #a0a0a0;
}

.gr { fill: none; stroke: #078a07; stroke-width: 1.2; }

.ic-fx { font: italic bold 11px "Liberation Serif", serif; }
.ic-ball { font: bold 11px "Liberation Serif", serif; text-anchor: middle; }
.ic-it { font-style: italic; font-size: 9px; }
.ic-num { font: bold 7px "Liberation Sans", sans-serif; text-anchor: middle; }
.ic-100 { font: bold 6px "Liberation Sans", sans-serif; text-anchor: middle; }
.ic-a { font: bold 16px "Liberation Serif", serif; text-anchor: middle; fill: #23509c; }
.ic-lt { fill: #3f7fd8; }
.ic-q { font: bold 8px "Liberation Sans", sans-serif; text-anchor: middle; fill: #fff; }
.ic-sa { font: bold 10px "Liberation Serif", serif; text-anchor: middle; fill: #23509c; }

/* document areas */
.panel {
  display: flex;
  flex: 1;
  flex-direction: column;
  min-height: 0;
  padding: 1px;
  border: 1px solid;
  border-color: #a0a0a0 #fff #fff #a0a0a0;
  background: #fff;
  box-shadow: inset 1px 1px #696969, inset -1px -1px #e3e3e3;
}

.win-active .panel {
  padding-right: 0;
  border-right: 0;
  box-shadow: inset 1px 1px #696969, inset 0 -1px #e3e3e3;
}

.canvas { display: block; flex: 1; width: 100%; min-height: 0; }

.grid { fill: none; stroke: #7c7c7c; }
.dash { stroke-dasharray: 3 3; }
.trace { fill: none; shape-rendering: crispEdges; }
.blue { stroke: #00f; }
.red { stroke: #f00; }

.axis { font: 10px "Liberation Sans", Arial, sans-serif; fill: #00f; }
.mid { text-anchor: middle; }
.end { text-anchor: end; }
.ul { text-decoration: underline; }
.rd { fill: #f00; }

.wire { fill: none; stroke: #008000; }
.part { fill: none; stroke: #00f; }
.label { font: 12px "DejaVu Sans", Verdana, sans-serif; fill: #008000; }
.node { font: 12px "Liberation Sans", Arial, sans-serif; text-anchor: middle; }
.node rect { fill: #fff; stroke: #f0f; }
.node text { fill: #f0f; }

/* page tabs */
.foot {
  display: flex;
  flex: none;
  height: 16px;
  padding-left: 3px;
  background: #f0f0f0;
  font: 11px "Liberation Sans", Arial, sans-serif;
}

.nav { display: flex; gap: 1px; }

.nav button,
.scroll button {
  width: 16px;
  height: 16px;
  border: 1px solid;
  border-color: #fff #696969 #696969 #fff;
  background: #f0f0f0;
  outline: 1px solid #888;
  outline-offset: -1px;
}

.nav svg,
.scroll svg { display: block; width: 14px; height: 14px; }

.tabs {
  display: flex;
  flex: 1;
  border-top: 1px solid #000;
  line-height: 14px;
}

.edge { width: 8px; height: 15px; flex: none; fill: none; stroke: #000; }
.edge .fill { fill: #fff; stroke: none; }
.tabs button { padding: 0 4px 0 2px; color: #0a0a3c; }
.tabs .cur { padding: 0 1px 0 0; background: #fff; color: #000; font-weight: 700; }

.scroll { display: flex; flex: 0 0 97px; }

.grip {
  width: 6px;
  border: 1px solid #555;
  border-left: 2px solid #000;
  background: #ddd;
}

.scroll button { outline: 0; border-right-color: #888; }
.thumb { flex: 1; border: 1px solid #fff; border-right: 0; background: #f0f0f0; }
```
